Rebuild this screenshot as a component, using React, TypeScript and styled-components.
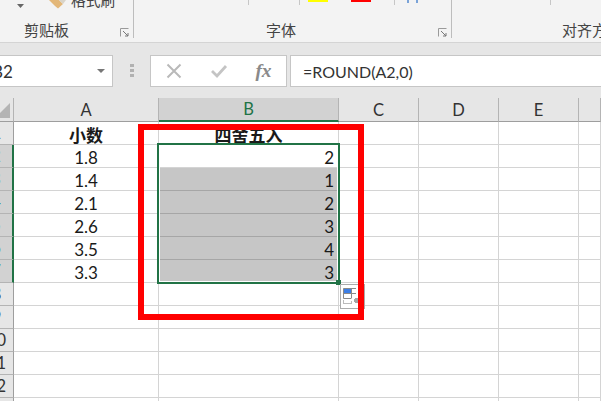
import React from "react";
import styled, { createGlobalStyle } from "styled-components";

const Global = createGlobalStyle`
  html, body { margin: 0; padding: 0; background: #fff; overflow: hidden; }
  body { width: 601px; height: 401px; font-family: Lato, "Noto Sans CJK SC", sans-serif; color: #1a1a1a; }
`;

const Page = styled.div`
  width: 601px;
  height: 401px;
  overflow: hidden;
`;

const Ribbon = styled.div`
  height: 43px;
  box-sizing: border-box;
  background: #f3f3f3;
  border-bottom: 1px solid #d4d4d4;
  display: grid;
  grid-template-columns: 134px 318px 1fr;
`;

const RibbonGroup = styled.div<{ $last?: boolean }>`
  height: 38px;
  box-sizing: border-box;
  border-right: ${(p) => (p.$last ? "none" : "1px solid #bdbdbd")};
  display: flex;
  flex-direction: column;
  min-width: 0;
`;

const ControlRow = styled.div`
  height: 21px;
  box-sizing: border-box;
  overflow: hidden;
  display: flex;
  align-items: flex-start;
`;

const ClipboardRow = styled(ControlRow)`
  align-items: flex-end;
  padding: 0 0 11px 15px;
  gap: 3px;
`;

const Slot = styled.div<{ $w: number; $line?: boolean }>`
  width: ${(p) => p.$w}px;
  height: 5px;
  box-sizing: border-box;
  flex: none;
  border-right: ${(p) => (p.$line ? "1px solid #c6c6c6" : "none")};
  display: flex;
  gap: 23px;
  padding-left: 8px;
`;

const BrushLabel = styled.span`
  font-size: 14.7px;
  line-height: 19px;
  color: #444;
  white-space: nowrap;
`;

const Swatch = styled.div<{ $color: string }>`
  width: 20px;
  height: 2px;
  background: ${(p) => p.$color};
`;

const LabelRow = styled.div<{ $pad: number }>`
  height: 17px;
  display: flex;
  justify-content: space-between;
  align-items: flex-start;
  padding: 0 4px 0 ${(p) => p.$pad}px;
`;

const GroupLabel = styled.span`
  font-size: 15px;
  line-height: 19px;
  color: #444;
  white-space: nowrap;
`;

const Launcher = styled.svg`
  margin-top: 7px;
  flex: none;
`;

const FormulaBar = styled.div`
  height: 55px;
  background: #e6e6e6;
  box-sizing: border-box;
  padding: 12px 0;
  display: flex;
  margin-left: -20px;
  width: 621px;
`;

const NameBox = styled.div`
  width: 133px;
  height: 32px;
  box-sizing: border-box;
  background: #fff;
  border: 1px solid #c6c6c6;
  border-left: none;
  display: flex;
  align-items: center;
  justify-content: space-between;
  padding: 0 7px 0 12px;
  font-size: 17px;
  color: #333;
`;

const Caret = styled.span`
  width: 0;
  height: 0;
  border-left: 4px solid transparent;
  border-right: 4px solid transparent;
  border-top: 4px solid #777;
`;

const Grip = styled.div`
  width: 37px;
  display: flex;
  flex-direction: column;
  align-items: center;
  justify-content: center;
  gap: 1.5px;
  span {
    width: 4px;
    height: 3.5px;
    background: #b1b1b1;
  }
`;

const FxBox = styled.div`
  width: 137px;
  height: 32px;
  box-sizing: border-box;
  background: #fff;
  border: 1px solid #c6c6c6;
  display: flex;
  align-items: center;
`;

const FxButton = styled.div`
  width: 45px;
  height: 100%;
  display: flex;
  align-items: center;
  justify-content: center;
`;

const FxGlyph = styled.span`
  font-family: "Liberation Serif", serif;
  font-style: italic;
  font-weight: 700;
  font-size: 19.5px;
  color: #8a8a8a;
`;

const FormulaInput = styled.div`
  margin-left: 3px;
  flex: 1;
  height: 32px;
  box-sizing: border-box;
  background: #fff;
  border: 1px solid #c6c6c6;
  border-right: none;
  display: flex;
  align-items: center;
  padding-left: 12px;
  font-size: 16px;
  color: #333;
`;

const Sheet = styled.div`
  position: relative;
  margin-left: -20px;
  width: 621px;
  display: grid;
  grid-template-columns: 34px 145px 180px 80px 80px 80px 22px;
  grid-template-rows: 24px repeat(13, 23px);
`;

const Corner = styled.div`
  background: #e6e6e6;
  border-right: 1px solid #b4b4b4;
  border-bottom: 1px solid #9e9e9e;
  position: relative;
  box-sizing: border-box;
  &::after {
    content: "";
    position: absolute;
    right: 3px;
    bottom: 3px;
    border-left: 15px solid transparent;
    border-bottom: 15px solid #b4b4b4;
  }
`;

const ColHead = styled.div<{ $active?: boolean }>`
  box-sizing: border-box;
  background: ${(p) => (p.$active ? "#d2d2d2" : "#e6e6e6")};
  border-right: 1px solid #b4b4b4;
  border-bottom: ${(p) => (p.$active ? "2px solid #217346" : "1px solid #9e9e9e")};
  display: flex;
  align-items: center;
  justify-content: center;
  font-size: 16.5px;
  color: ${(p) => (p.$active ? "#217346" : "#333")};
`;

const RowHead = styled.div<{ $active?: boolean }>`
  box-sizing: border-box;
  background: ${(p) => (p.$active ? "#d2d2d2" : "#e6e6e6")};
  border-right: ${(p) => (p.$active ? "2px solid #217346" : "1px solid #9e9e9e")};
  border-bottom: 1px solid #b4b4b4;
  display: flex;
  align-items: center;
  justify-content: center;
  font-size: 16.5px;
  color: ${(p) => (p.$active ? "#217346" : "#333")};
`;

const Cell = styled.div<{ $align?: string; $bold?: boolean; $filled?: boolean }>`
  box-sizing: border-box;
  background: ${(p) => (p.$filled ? "#c6c6c6" : "#fff")};
  border-right: 1px solid ${(p) => (p.$filled ? "#c6c6c6" : "#d4d4d4")};
  border-bottom: 1px solid ${(p) => (p.$filled ? "#a6a6a6" : "#d4d4d4")};
  display: flex;
  align-items: center;
  justify-content: ${(p) => p.$align || "center"};
  padding: 2px 4px 0;
  font-size: 17px;
  font-weight: ${(p) => (p.$bold ? 700 : 400)};
  white-space: nowrap;
  color: #1a1a1a;
`;

const Selection = styled.div`
  position: absolute;
  left: 177px;
  top: 45px;
  width: 183px;
  height: 141px;
  box-sizing: border-box;
  border: 2px solid #217346;
  box-shadow: inset 0 0 0 1px #fff;
  pointer-events: none;
`;

const FillHandle = styled.div`
  position: absolute;
  right: -3px;
  bottom: -3px;
  width: 5px;
  height: 5px;
  background: #217346;
`;

const PasteOptions = styled.div`
  position: absolute;
  left: 360px;
  top: 186px;
  width: 25px;
  height: 25px;
  box-sizing: border-box;
  background: #fff;
  border: 1px solid #ababab;
`;

const RedBox = styled.div`
  position: absolute;
  left: 158px;
  top: 26px;
  width: 226px;
  height: 196px;
  box-sizing: border-box;
  border: 6px solid #ff0000;
  pointer-events: none;
`;

const LauncherIcon = () => (
  <Launcher width="9" height="9" viewBox="0 0 9 9">
    <path d="M0.5 8.5V0.5H8.5" fill="none" stroke="#9a9a9a" />
    <path d="M3 3L8 8M5 8H8V5" fill="none" stroke="#777" />
  </Launcher>
);

const values = ["1.8", "1.4", "2.1", "2.6", "3.5", "3.3"];
const rounded = ["2", "1", "2", "3", "4", "3"];
const columns = ["A", "B", "C", "D", "E", ""];

function App() {
  const rows = Array.from({ length: 12 }, (_, i) => i + 2);
  return (
    <Page>
      <Global />
      <Ribbon>
        <RibbonGroup>
          <ClipboardRow>
            <svg width="9" height="10" viewBox="0 0 9 10" style={{ flex: "none" }}>
              <path d="M2 4H9L5.5 8Z" fill="#666" />
            </svg>
            <svg width="41" height="10" viewBox="0 0 41 10" style={{ flex: "none" }}>
              <path d="M22 0L28 6L31 8.5L36 4L32 0Z" fill="#e3b778" />
              <path d="M32 0L36 4L39 0Z" fill="#d9d4c8" />
            </svg>
            <BrushLabel>格式刷</BrushLabel>
          </ClipboardRow>
          <LabelRow $pad={24}>
            <GroupLabel>剪贴板</GroupLabel>
            <LauncherIcon />
          </LabelRow>
        </RibbonGroup>
        <RibbonGroup>
          <ControlRow>
            <Slot $w={115} $line />
            <Slot $w={51} $line />
            <Slot $w={95} $line>
              <Swatch $color="#ffff00" />
              <Swatch $color="#ff0000" />
            </Slot>
            <Slot $w={56}>
              <svg width="16" height="3" viewBox="0 0 16 3" style={{ marginLeft: 4 }}>
                <path d="M1 0V3M10 0V3" stroke="#7aa3d8" strokeWidth="2" />
              </svg>
            </Slot>
          </ControlRow>
          <LabelRow $pad={132}>
            <GroupLabel>字体</GroupLabel>
            <LauncherIcon />
          </LabelRow>
        </RibbonGroup>
        <RibbonGroup $last>
          <ControlRow>
            <Slot $w={99} $line />
          </ControlRow>
          <LabelRow $pad={110}>
            <GroupLabel>对齐方式</GroupLabel>
          </LabelRow>
        </RibbonGroup>
      </Ribbon>
      <FormulaBar>
        <NameBox>
          B2
          <Caret />
        </NameBox>
        <Grip>
          <span />
          <span />
          <span />
        </Grip>
        <FxBox>
          <FxButton>
            <svg width="16" height="16" viewBox="0 0 16 16">
              <path d="M1.5 1.5L14.5 14.5M14.5 1.5L1.5 14.5" stroke="#b9b9b9" strokeWidth="2" />
            </svg>
          </FxButton>
          <FxButton>
            <svg width="18" height="16" viewBox="0 0 18 16">
              <path d="M2 8L7 13L16 3" fill="none" stroke="#c4c4c4" strokeWidth="2.8" />
            </svg>
          </FxButton>
          <FxButton>
            <FxGlyph>fx</FxGlyph>
          </FxButton>
        </FxBox>
        <FormulaInput>=ROUND(A2,0)</FormulaInput>
      </FormulaBar>
      <Sheet>
        <Corner />
        {columns.map((c, i) => (
          <ColHead key={i} $active={c === "B"}>
            {c}
          </ColHead>
        ))}
        <RowHead>1</RowHead>
        <Cell $bold>小数</Cell>
        <Cell $bold>四舍五入</Cell>
        <Cell />
        <Cell />
        <Cell />
        <Cell />
        {rows.map((r) => {
          const i = r - 2;
          const inData = i < values.length;
          return (
            <React.Fragment key={r}>
              <RowHead $active={inData}>{r}</RowHead>
              <Cell>{values[i]}</Cell>
              <Cell $align="flex-end" $filled={inData && i > 0}>
                {rounded[i]}
              </Cell>
              <Cell />
              <Cell />
              <Cell />
              <Cell />
            </React.Fragment>
          );
        })}
        <Selection>
          <FillHandle />
        </Selection>
        <PasteOptions>
          <svg width="23" height="23" viewBox="0 0 23 23">
            <rect x="2.5" y="3.5" width="8" height="5" fill="#3d7fe6" />
            <path d="M2.5 3.5H15M2.5 8.5H15M2.5 13.5H10M2.5 3.5V13.5M10.5 3.5V13.5" fill="none" stroke="#8a8a8a" />
            <path d="M2.5 15.5V18.5H10.5V15.5" fill="none" stroke="#777" strokeDasharray="1 1" />
            <path d="M13 15.5H22M15.5 13V18" stroke="#a5a5a5" strokeWidth="3" />
          </svg>
        </PasteOptions>
        <RedBox />
      </Sheet>
    </Page>
  );
}

export default App;
